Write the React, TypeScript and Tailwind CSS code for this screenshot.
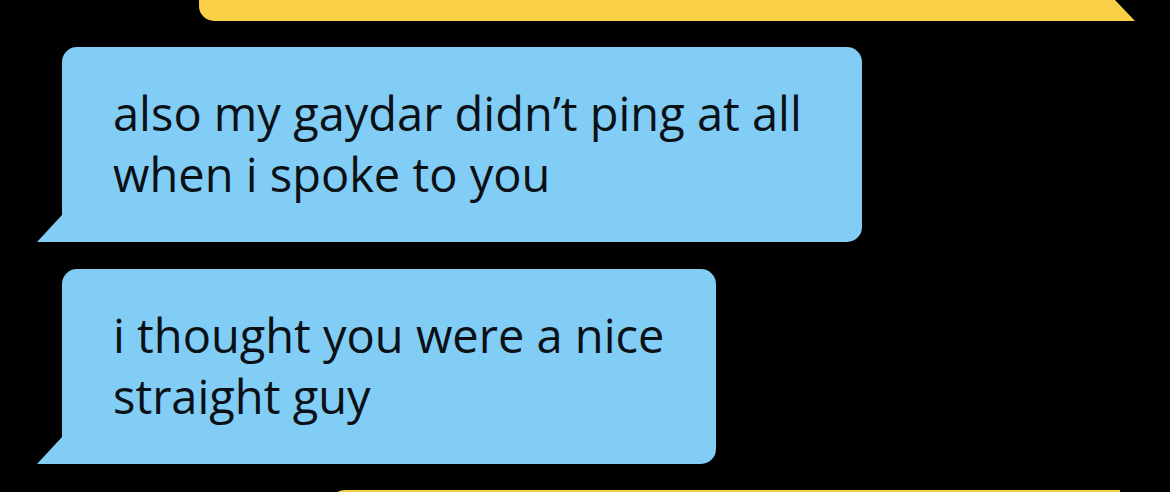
import React from 'react';

interface BubbleProps {
    lines: string[];
    width: string;
}

const Tail: React.FC = () => (
    <svg
        className="absolute left-[-25px] bottom-0"
        width="26"
        height="27"
        viewBox="0 0 26 27"
    >
        <path d="M25 0 L26 0 L26 27 L0 27 Z" fill="#81cdf6" />
    </svg>
);

const Bubble: React.FC<BubbleProps> = ({ lines, width }) => {
    return (
        <div
            className={`relative ${width} h-[195px] bg-[#81cdf6] rounded-t-[15px] rounded-br-[15px] pl-[51px] pt-[36px]`}
        >
            <Tail />
            {lines.map((line) => (
                <p
                    key={line}
                    className="text-[47px] leading-[61px] font-medium text-[#0b1015] whitespace-nowrap"
                >
                    {line}
                </p>
            ))}
        </div>
    );
};

export default function App() {
    return (
        <div
            className="w-[1170px] h-[492px] overflow-hidden bg-black flex flex-col"
            style={{ fontFamily: '"Open Sans", "Noto Sans", sans-serif' }}
        >
            {/* outgoing bubble, mostly scrolled off the top */}
            <div className="flex h-[21px] pl-[199px] shrink-0">
                <div className="w-[915px] bg-[#f9cf48] rounded-bl-[15px]" />
                <svg width="21" height="21" viewBox="0 0 21 21">
                    <path d="M0 0 L1 0 L21 21 L0 21 Z" fill="#f9cf48" />
                </svg>
            </div>

            <div className="flex flex-col gap-[27px] pl-[62px] mt-[26px] shrink-0">
                <Bubble
                    width="w-[800px]"
                    lines={['also my gaydar didn’t ping at all', 'when i spoke to you']}
                />
                <Bubble
                    width="w-[654px]"
                    lines={['i thought you were a nice', 'straight guy']}
                />
            </div>

            {/* next outgoing bubble peeking in */}
            <div className="mt-[26px] ml-[330px] w-[790px] h-[40px] bg-[#f9cf48] rounded-tl-[15px] shrink-0" />
        </div>
    );
}
